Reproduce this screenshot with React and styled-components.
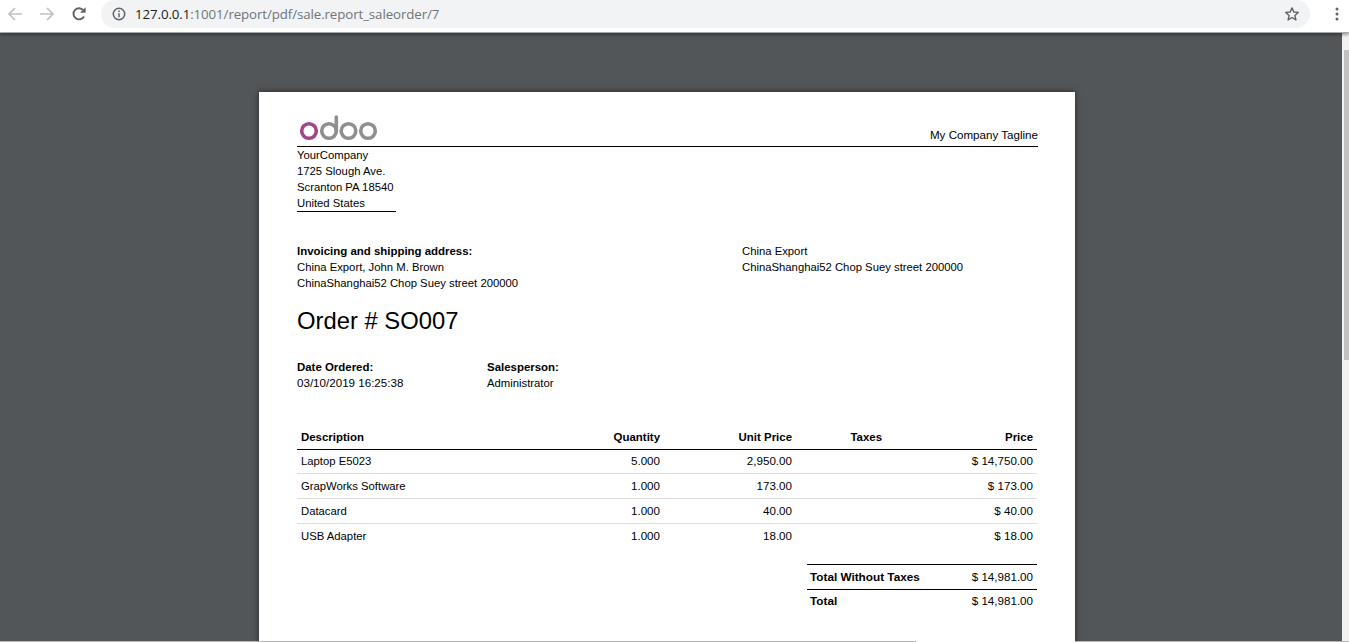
import React from 'react'
import styled, { createGlobalStyle } from 'styled-components'

const GlobalStyle = createGlobalStyle`
  html, body { margin: 0; padding: 0; height: 100%; overflow: hidden; }
  body { font-family: "Liberation Sans", Arial, sans-serif; background: #525659; }
`

const Window = styled.div`
  width: 1349px;
  height: 642px;
  display: flex;
  flex-direction: column;
  overflow: hidden;
`
const Toolbar = styled.div`
  height: 32px;
  flex: none;
  display: flex;
  align-items: flex-start;
  background: #fff;
  border-bottom: 1px solid #a8a8a8;
  box-shadow: 0 2px 3px rgba(0, 0, 0, 0.35);
  position: relative;
  z-index: 2;
`
const NavButton = styled.div`
  width: 32px;
  height: 28px;
  display: flex;
  align-items: center;
  justify-content: center;
  flex: none;
`
const NavGroup = styled.div`
  display: flex;
  margin-left: -1px;
  width: 102px;
  flex: none;
`
const Omnibox = styled.div`
  width: 1209px;
  height: 28px;
  border-radius: 14px;
  background: #f1f3f4;
  display: flex;
  align-items: center;
  padding: 0 10px 0 11px;
  box-sizing: border-box;
  flex: none;
`
const Url = styled.div`
  margin-left: 9px;
  flex: 1;
  font-family: "Open Sans", sans-serif;
  font-size: 13.3px;
  color: #70757a;
  white-space: nowrap;
  letter-spacing: -0.1px;
  b { font-weight: 400; color: #202124; }
`
const Menu = styled.div`
  flex: 1;
  height: 28px;
  display: flex;
  align-items: center;
  justify-content: center;
  padding-left: 14px;
`
const Body = styled.div`
  flex: 1;
  display: flex;
  min-height: 0;
`
const Viewer = styled.div`
  flex: 1;
  background: #525659;
  padding: 59px 0 0 259px;
  overflow: hidden;
`
const Scrollbar = styled.div`
  width: 7px;
  flex: none;
  background: #f1f1f1;
  padding: 17px 0 0 2px;
  box-sizing: border-box;
`
const Thumb = styled.div`
  height: 310px;
  background: #c1c1c1;
`
const BottomEdge = styled.div`
  height: 1px;
  flex: none;
  display: flex;
  background: #b5b5b5;
`
const EdgeGap = styled.div`
  margin-left: 916px;
  width: 159px;
  background: #fff;
`
const Page = styled.div`
  width: 816px;
  height: 1056px;
  background: #fff;
  box-shadow: 0 0 6px rgba(0, 0, 0, 0.55);
  padding: 21px 37px 0 38px;
  box-sizing: border-box;
  color: #000;
  font-size: 11.3px;
  line-height: 16px;
`
const Header = styled.div`
  display: flex;
  justify-content: space-between;
  align-items: flex-end;
  height: 33px;
  border-bottom: 1px solid #000;
  box-sizing: content-box;
`
const Logo = styled.svg`
  display: block;
  margin-bottom: 5px;
`
const Tagline = styled.div`
  padding-bottom: 3px;
  font-size: 11.6px;
`
const Company = styled.div`
  width: 99px;
  white-space: nowrap;
  border-bottom: 1px solid #000;
`
const AddressRow = styled.div`
  display: flex;
  margin-top: 31px;
`
const AddressCol = styled.div`
  width: 445px;
  flex: none;
`
const Title = styled.h2`
  margin: 15px 0 0;
  font-size: 23.8px;
  line-height: 30px;
  font-weight: 400;
`
const InfoRow = styled.div`
  display: flex;
  margin-top: 23px;
`
const InfoCol = styled.div`
  width: 190px;
  flex: none;
`
const Bold = styled.div`
  font-weight: 700;
  font-size: ${(p) => (p.$wide ? '11.75px' : '11.45px')};
`
const Num = styled.span`
  font-size: 11.6px;
`
const Table = styled.div`
  margin-top: 34px;
  width: 740px;
`
const Row = styled.div`
  display: grid;
  grid-template-columns: 277px 90px 132px 90px 151px;
  height: ${(p) => (p.$head ? 24 : p.$first ? 22 : 24)}px;
  padding-bottom: ${(p) => (p.$first ? 1 : 0)}px;
  align-items: center;
  border-bottom: 1px solid ${(p) => (p.$head ? '#000' : p.$last ? 'transparent' : '#ddd')};
  font-weight: ${(p) => (p.$head ? 700 : 400)};
  font-size: ${(p) => (p.$head ? '11.45px' : 'inherit')};
`
const Cell = styled.div`
  padding: 0 4px;
  text-align: ${(p) => (p.$left ? 'left' : 'right')};
`
const Totals = styled.div`
  width: 230px;
  margin: 15px 0 0 510px;
  border-top: 1px solid #000;
`
const TotalRow = styled.div`
  display: flex;
  justify-content: space-between;
  align-items: center;
  height: ${(p) => (p.$last ? 22 : 24)}px;
  padding: 0 4px 0 3px;
  border-bottom: ${(p) => (p.$last ? 'none' : '1px solid #000')};
`

const lines = [
  ['Laptop E5023', '5.000', '2,950.00', '$ 14,750.00'],
  ['GrapWorks Software', '1.000', '173.00', '$ 173.00'],
  ['Datacard', '1.000', '40.00', '$ 40.00'],
  ['USB Adapter', '1.000', '18.00', '$ 18.00'],
]

function OdooLogo() {
  return (
    <Logo width="82" height="27" viewBox="0 0 82 27">
      <circle cx="12" cy="17" r="7.3" fill="none" stroke="#a24689" strokeWidth="3.6" />
      <circle cx="32" cy="17" r="7.3" fill="none" stroke="#8f8f8f" strokeWidth="3.6" />
      <path d="M39.3 3v14" fill="none" stroke="#8f8f8f" strokeWidth="3.6" strokeLinecap="round" />
      <circle cx="51.5" cy="17" r="7.3" fill="none" stroke="#8f8f8f" strokeWidth="3.6" />
      <circle cx="71" cy="17" r="7.3" fill="none" stroke="#8f8f8f" strokeWidth="3.6" />
    </Logo>
  )
}

export default function App() {
  return (
    <Window>
      <GlobalStyle />
      <Toolbar>
        <NavGroup>
          <NavButton>
            <svg width="16" height="16" viewBox="0 0 16 16" fill="none" stroke="#bdc1c6" strokeWidth="1.7">
              <path d="M15 8H2M8 2 2 8l6 6" />
            </svg>
          </NavButton>
          <NavButton>
            <svg width="16" height="16" viewBox="0 0 16 16" fill="none" stroke="#bdc1c6" strokeWidth="1.7">
              <path d="M1 8h13M8 2l6 6-6 6" />
            </svg>
          </NavButton>
          <NavButton>
            <svg width="16" height="16" viewBox="0 0 16 16" fill="none" stroke="#5f6368" strokeWidth="1.9">
              <path d="M13 10.5A5.6 5.6 0 1 1 12.4 4.2" />
              <path d="M14.6 1.2v5.6H9z" fill="#5f6368" stroke="none" />
            </svg>
          </NavButton>
        </NavGroup>
        <Omnibox>
          <svg width="14" height="14" viewBox="0 0 14 14" fill="none">
            <circle cx="7" cy="7" r="5.7" stroke="#5f6368" strokeWidth="1.5" />
            <path d="M7 6.2v4M7 3.6v1.5" stroke="#5f6368" strokeWidth="1.5" />
          </svg>
          <Url><b>127.0.0.1</b>:1001/report/pdf/sale.report_saleorder/7</Url>
          <svg width="16" height="16" viewBox="0 0 16 16" fill="none">
            <path d="M8 1.9l1.8 4.1 4.5.4-3.4 3 1 4.4L8 11.5l-3.9 2.3 1-4.4-3.4-3 4.5-.4z" stroke="#5f6368" strokeWidth="1.4" strokeLinejoin="round" />
          </svg>
        </Omnibox>
        <Menu>
          <svg width="4" height="14" viewBox="0 0 4 14" fill="#5f6368">
            <circle cx="2" cy="2" r="1.5" />
            <circle cx="2" cy="7" r="1.5" />
            <circle cx="2" cy="12" r="1.5" />
          </svg>
        </Menu>
      </Toolbar>
      <Body>
        <Viewer>
          <Page>
            <Header>
              <OdooLogo />
              <Tagline>My Company Tagline</Tagline>
            </Header>
            <Company>
              YourCompany<br />
              1725 Slough Ave.<br />
              Scranton PA 18540<br />
              United States
            </Company>
            <AddressRow>
              <AddressCol>
                <Bold>Invoicing and shipping address:</Bold>
                China Export, John M. Brown<br />
                ChinaShanghai52 Chop Suey street 200000
              </AddressCol>
              <div>
                China Export<br />
                ChinaShanghai52 Chop Suey street 200000
              </div>
            </AddressRow>
            <Title>Order # SO007</Title>
            <InfoRow>
              <InfoCol>
                <Bold>Date Ordered:</Bold>
                <Num>03/10/2019 16:25:38</Num>
              </InfoCol>
              <InfoCol>
                <Bold>Salesperson:</Bold>
                Administrator
              </InfoCol>
            </InfoRow>
            <Table>
              <Row $head>
                <Cell $left>Description</Cell>
                <Cell>Quantity</Cell>
                <Cell>Unit Price</Cell>
                <Cell>Taxes</Cell>
                <Cell>Price</Cell>
              </Row>
              {lines.map((l, i) => (
                <Row key={l[0]} $first={i === 0} $last={i === lines.length - 1}>
                  <Cell $left>{l[0]}</Cell>
                  <Cell><Num>{l[1]}</Num></Cell>
                  <Cell><Num>{l[2]}</Num></Cell>
                  <Cell />
                  <Cell><Num>{l[3]}</Num></Cell>
                </Row>
              ))}
              <Totals>
                <TotalRow>
                  <Bold $wide>Total Without Taxes</Bold>
                  <Num>$ 14,981.00</Num>
                </TotalRow>
                <TotalRow $last>
                  <Bold $wide>Total</Bold>
                  <Num>$ 14,981.00</Num>
                </TotalRow>
              </Totals>
            </Table>
          </Page>
        </Viewer>
        <Scrollbar>
          <Thumb />
        </Scrollbar>
      </Body>
      <BottomEdge>
        <EdgeGap />
      </BottomEdge>
    </Window>
  )
}
